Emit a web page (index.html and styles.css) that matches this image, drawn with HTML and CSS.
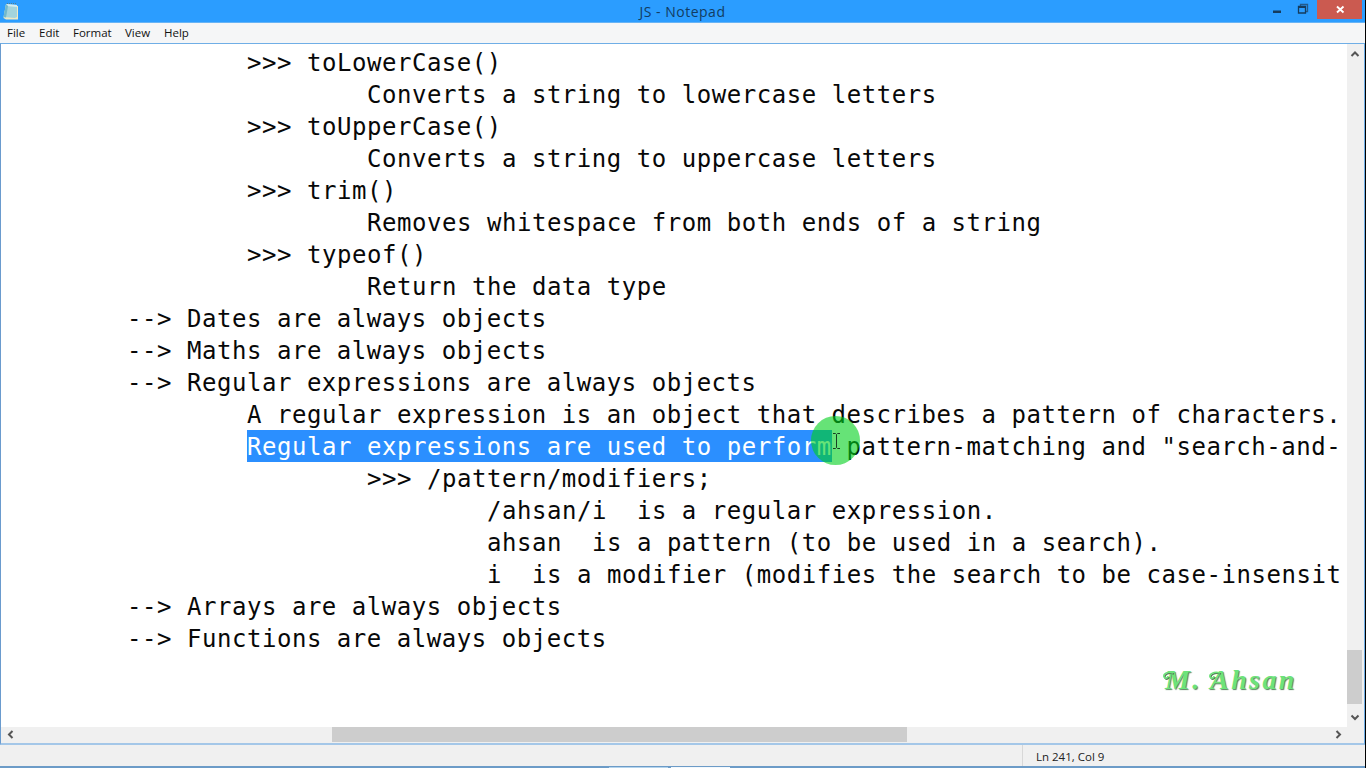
FILE: index.html
```html
<!DOCTYPE html>
<html lang="en">
<head>
<meta charset="utf-8">
<title>JS - Notepad</title>
<link rel="stylesheet" href="styles.css">
</head>
<body>
<div class="window">
  <header class="titlebar">
    <svg class="app-icon" width="16" height="18" viewBox="0 0 16 18">
      <path d="M3 2.500 15 4v13.500H3L.5 16z" fill="#eee9c4"/>
      <path d="M3 2 14 3v12L12 16 .5 15z" fill="#a3d4dc"/>
      <path d="M3 2 14 3v2L3 4z" fill="#d5edf0"/>
      <path d="M3 2 .5 15 3 15.500 5 4z" fill="#72b8cb"/>
      <path d="M4 1.500h9" stroke="#527e91" stroke-dasharray="1 1"/>
    </svg>
    <h1 class="title">JS - Notepad</h1>
    <div class="controls">
      <svg class="control" width="26" height="20" viewBox="0 0 26 20"><path d="M8 10.500h8v2.500H8z" fill="#153c5e"/></svg>
      <svg class="control" width="26" height="20" viewBox="0 0 26 20"><path d="M9.500 6V4.500h7v7H15" fill="none" stroke="#235b8d" stroke-width="1.300"/><path d="M7.500 6.500h7v6.500h-7z" fill="none" stroke="#153c5e" stroke-width="1.300"/><path d="M7 6h8v2H7z" fill="#153c5e"/></svg>
      <svg class="control close" width="45" height="19" viewBox="0 0 45 19"><path d="M20 6.500l6.500 6M26.500 6.500l-6.500 6" stroke="#fff" stroke-width="1.900"/></svg>
    </div>
  </header>
  <nav class="menu"><span class="m-file">File</span><span class="m-edit">Edit</span><span class="m-format">Format</span><span class="m-view">View</span><span class="m-help">Help</span></nav>
  <main class="editor">
    <div class="upper">
      <div class="text">
        <div class="line in2">&gt;&gt;&gt; toLowerCase()</div>
        <div class="line in3">Converts a string to lowercase letters</div>
        <div class="line in2">&gt;&gt;&gt; toUpperCase()</div>
        <div class="line in3">Converts a string to uppercase letters</div>
        <div class="line in2">&gt;&gt;&gt; trim()</div>
        <div class="line in3">Removes whitespace from both ends of a string</div>
        <div class="line in2">&gt;&gt;&gt; typeof()</div>
        <div class="line in3">Return the data type</div>
        <div class="line in1">--&gt; Dates are always objects</div>
        <div class="line in1">--&gt; Maths are always objects</div>
        <div class="line in1">--&gt; Regular expressions are always objects</div>
        <div class="line in2">A regular expression is an object that describes a pattern of characters.</div>
        <div class="line in2 split"><span class="selected">Regular expressions are used to perform</span><span> pattern-matching and "search-and-</span></div>
        <div class="line in3">&gt;&gt;&gt; /pattern/modifiers;</div>
        <div class="line in4">/ahsan/i  is a regular expression.</div>
        <div class="line in4">ahsan  is a pattern (to be used in a search).</div>
        <div class="line in4">i  is a modifier (modifies the search to be case-insensit</div>
        <div class="line in1">--&gt; Arrays are always objects</div>
        <div class="line in1">--&gt; Functions are always objects</div>
      </div>
      <div class="vscroll">
        <svg width="15" height="20" viewBox="0 0 15 20"><path d="M4.500 12 8 8.500l3.500 3.500" class="arrow"/></svg>
        <div class="vthumb"></div>
        <svg width="15" height="23" viewBox="0 0 15 23"><path d="M4.500 11.500 8 15l3.500-3.500" class="arrow"/></svg>
      </div>
    </div>
    <div class="hscroll">
      <svg width="18" height="15" viewBox="0 0 18 15"><path d="M11.500 4 8 7.500l3.500 3.500" class="arrow"/></svg>
      <div class="hthumb"></div>
      <svg width="18" height="15" viewBox="0 0 18 15"><path d="M6.500 4 10 7.500 6.500 11" class="arrow"/></svg>
    </div>
  </main>
  <footer class="status"><div class="position">Ln 241, Col 9</div></footer>
  <div class="bottom-edge"><span class="tab"></span><span class="tab light"></span></div>
  <div class="halo"></div>
  <svg class="cursor" width="9" height="18" viewBox="0 0 9 18"><path d="M1 1.500h2.500l1 1 1-1H8M4.500 2.500v13M1 16.500h2.500l1-1 1 1H8" fill="none" stroke="#173f24"/></svg>
  <div class="signature">M. Ahsan</div>
  <svg class="swash" width="70" height="30" viewBox="0 0 70 30"><path d="M14 8C8 6 4 9 5 12c1 2 4 1 4-1M61 8c-6-2-11 1-10 4 1 2 4 1 4-1" fill="none" stroke="#6de37a" stroke-width="1.600"/></svg>
</div>
</body>
</html>
```
FILE: styles.css
```css
* { box-sizing: border-box; }
body { margin: 0; overflow: hidden; font-family: "Open Sans", "Noto Sans", sans-serif; }
.window { position: relative; width: 1366px; height: 768px; display: flex; flex-direction: column; background: #f0f0f0; border-right: 1px solid #000; overflow: hidden; }
.titlebar { height: 23px; flex: none; display: grid; grid-template-columns: 150px 1fr 150px; background: #2b9dff; border-bottom: 1px solid #67b4f6; }
.app-icon { margin: 2px 0 0 3px; }
.title { margin: 0; font-size: 14px; letter-spacing: .5px; font-weight: 400; line-height: 23px; text-align: center; color: #123c62; }
.controls { display: flex; justify-content: flex-end; padding-right: 3px; }
.control { flex: none; }
.close { background: #cb5a50; }
.menu { height: 20px; flex: none; display: flex; padding-left: 7px; background: #f5f6f7; font-size: 11.5px; line-height: 20px; color: #111; }
.menu span { flex: none; }
.m-file { width: 32px; }
.m-edit { width: 34px; }
.m-format { width: 52px; }
.m-view { width: 39px; }
.editor { height: 702px; flex: none; display: flex; flex-direction: column; border: 1px solid #6faee6; border-left-color: #6a9bce; border-bottom: 2px solid #a4c7e8; background: #fff; }
.upper { flex: 1; min-height: 0; display: flex; }
.text { width: 1346px; flex: none; padding: 3px 0 0 6px; font-family: "DejaVu Sans Mono", monospace; font-size: 24px; letter-spacing: .541px; line-height: 32px; color: #080808; }
.line { height: 32px; white-space: pre; }
.in1 { padding-left: 120px; }
.in2 { padding-left: 240px; }
.in3 { padding-left: 360px; }
.in4 { padding-left: 480px; }
.split { display: flex; }
.selected { height: 32px; margin-top: -1px; padding-top: 1px; background: #2b8fff; color: #fff; }
.vscroll { width: 17px; flex: none; display: flex; flex-direction: column; background: #f0f0f0; }
.vthumb { width: 15px; height: 54px; margin-top: auto; background: #cdcdcd; }
.hscroll { height: 16px; flex: none; display: flex; align-items: flex-start; background: #f0f0f0; }
.hscroll svg:last-child { margin-left: auto; margin-right: 16px; }
.hthumb { width: 575px; height: 15px; margin-left: 313px; background: #cdcdcd; }
.arrow { fill: none; stroke: #555; stroke-width: 2; }
.status { height: 21px; flex: none; display: flex; justify-content: flex-end; background: #f0f0f0; }
.position { width: 343px; border-left: 1px solid #d8d8d8; padding: 3px 0 0 13px; font-size: 11.5px; line-height: 18px; color: #222; }
.bottom-edge { height: 2px; flex: none; display: flex; gap: 3px; padding-left: 609px; background: #6c9bc7; }
.tab { width: 59px; height: 1px; margin-top: 1px; background: #b4d4ed; }
.light { background: #f3f8fc; }
.halo { position: absolute; left: 811px; top: 416px; width: 49px; height: 49px; border-radius: 50%; background: rgba(0, 208, 28, .6); }
.cursor { position: absolute; left: 832px; top: 432px; }
.signature { position: absolute; left: 1165px; top: 663px; font: italic bold 28px/34px "Liberation Serif", serif; letter-spacing: 2.4px; white-space: nowrap; color: #6de37a; text-shadow: 1px 1px 1px #55805a; }
.swash { position: absolute; left: 1159px; top: 665px; filter: drop-shadow(1px 1px 0 #55805a); }
```
